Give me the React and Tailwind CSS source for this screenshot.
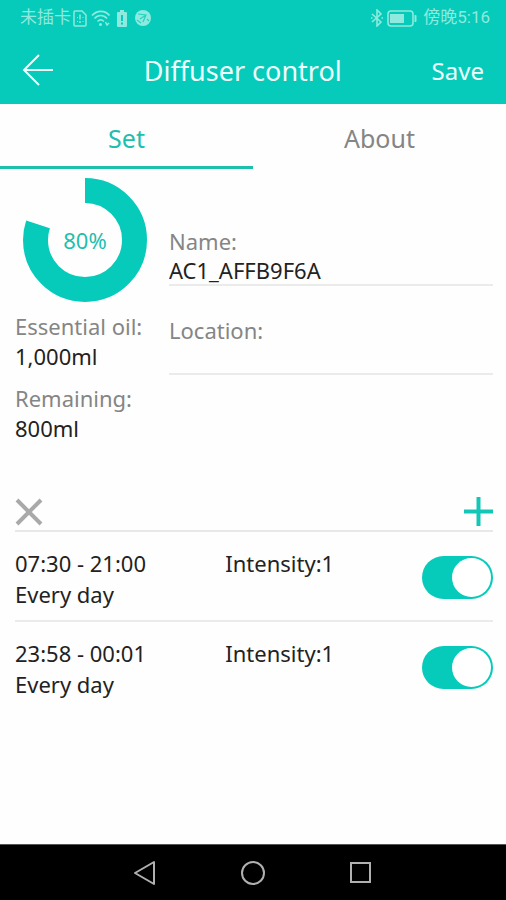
import { useState } from 'react';

const FONT = "font-['Noto_Sans','Noto_Sans_CJK_SC',sans-serif]";

const schedules = [
  { id: 'morning', time: '07:30 - 21:00', repeat: 'Every day', intensity: 1 },
  { id: 'night', time: '23:58 - 00:01', repeat: 'Every day', intensity: 1 },
];

function StatusBar() {
  return (
    <div className="flex h-9 items-center justify-between pr-4 pl-5 font-['Roboto','Noto_Sans_CJK_SC',sans-serif] text-[17px] text-[#8eeade]">
      <div className="flex items-center">
        <span>未插卡</span>
        <svg className="ml-0.5" width="14" height="17" viewBox="0 0 14 17" fill="none" stroke="currentColor" strokeWidth="1.5" aria-hidden="true">
          <path d="M2 1h7L13 5v10a1 1 0 0 1-1 1H2a1 1 0 0 1-1-1V2a1 1 0 0 1 1-1z" />
          <path d="M7 4.500v5M7 11v2" />
          <path d="M4 7.500h1M4 11.500h1M9.500 7.500h1M9.500 11.500h1" strokeWidth="1" />
        </svg>
        <svg className="ml-1" width="20" height="17" viewBox="0 0 20 17" fill="none" stroke="currentColor" strokeWidth="1.700" aria-hidden="true">
          <path d="M1 5.500C6 0 14 0 18.500 5.500M3.500 8.500c3.500-4 9-4 12.500 0M6.500 11.500c2-2 4.500-2 6.500 0" />
          <circle cx="9.500" cy="14.500" r="1.500" fill="currentColor" stroke="none" />
          <path d="M14.500 12l1.500 3 2-2" strokeWidth="1.500" />
        </svg>
        <svg className="ml-1.5" width="10" height="17" viewBox="0 0 10 17" aria-hidden="true">
          <path fillRule="evenodd" fill="currentColor" d="M3 0h4v2h2a1 1 0 0 1 1 1v13a1 1 0 0 1-1 1H1a1 1 0 0 1-1-1V3a1 1 0 0 1 1-1h2zM4 5v6h2V5zM4 12.500v2h2v-2z" />
        </svg>
        <svg className="ml-2" width="16" height="16" viewBox="0 0 16 16" aria-hidden="true">
          <circle cx="8" cy="8" r="8" fill="currentColor" />
          <path d="M3 4l8 1-3 7M5 9l6-4M2 10l4 3M12 9l2 2" fill="none" stroke="#25d2c0" strokeWidth="1.200" />
        </svg>
      </div>
      <div className="flex items-center">
        <svg width="12" height="18" viewBox="0 0 12 18" fill="none" stroke="currentColor" strokeWidth="1.600" aria-hidden="true">
          <path d="M1 5l9 8-4 4V1l4 4-9 8" />
          <path d="M0 9h1.500M10.500 9H12" />
        </svg>
        <svg className="mr-1.5 ml-1" width="30" height="17" viewBox="0 0 30 17" aria-hidden="true">
          <rect x="1" y="1" width="25" height="15" rx="3" fill="none" stroke="currentColor" strokeWidth="1.600" />
          <rect x="3" y="4" width="14" height="9" fill="currentColor" />
          <path d="M27.500 5h1a1 1 0 0 1 1 1v5a1 1 0 0 1-1 1h-1z" fill="currentColor" />
        </svg>
        <span>傍晚5:16</span>
      </div>
    </div>
  );
}

function OilGauge({ percent }) {
  const circumference = 2 * Math.PI * 49.5;
  const filled = (circumference * percent) / 100;
  return (
    <div className="ml-2 grid size-[124px] place-items-center">
      <svg className="col-start-1 row-start-1" width="124" height="124" viewBox="0 0 124 124" aria-hidden="true">
        <circle
          cx="62"
          cy="62"
          r="49.5"
          fill="none"
          stroke="#06cbba"
          strokeWidth="25"
          strokeDasharray={`${filled} ${circumference}`}
          transform="rotate(-90 62 62)"
        />
      </svg>
      <span className="col-start-1 row-start-1 text-[22px] text-[#1fbfae]">{percent}%</span>
    </div>
  );
}

function Reading({ label, value }) {
  return (
    <div className="leading-[30px]">
      <dt className="whitespace-nowrap text-[#858585]">{label}</dt>
      <dd className="text-[#222]">{value}</dd>
    </div>
  );
}

function Field({ id, label, defaultValue }) {
  return (
    <div className="flex flex-col border-b-2 border-[#ebebeb]">
      <label htmlFor={id} className="leading-[30px] text-[#858585]">{label}</label>
      <input id={id} defaultValue={defaultValue} className="h-7 w-full bg-transparent text-[#222] outline-none" />
    </div>
  );
}

function ScheduleRow({ schedule, last }) {
  const [on, setOn] = useState(true);
  return (
    <li className={last ? 'flex h-[90px] items-start pt-4' : 'flex h-[90px] items-start border-b-2 border-[#ebebeb] pt-4'}>
      <div className="w-[44%] leading-[31px]">
        <p>{schedule.time}</p>
        <p>{schedule.repeat}</p>
      </div>
      <p className="flex-1 leading-[31px]">Intensity:{schedule.intensity}</p>
      <label className="mt-2 flex h-[43px] w-[71px] cursor-pointer items-center rounded-full bg-[#b5b5b5] p-0.5 has-checked:justify-end has-checked:bg-[#06cbba]">
        <input
          type="checkbox"
          className="sr-only"
          checked={on}
          onChange={() => setOn(!on)}
          aria-label={`Schedule ${schedule.time}`}
        />
        <span className="size-[39px] rounded-full bg-white" />
      </label>
    </li>
  );
}

export default function App() {
  return (
    <div className={`flex min-h-screen flex-col bg-[#fefefe] text-[22px] text-[#222] ${FONT}`}>
      <header className="bg-[#06cbba]">
        <StatusBar />
        <div className="flex h-[68px] items-center justify-between px-[22px] text-[#eefffc]">
          <button type="button" aria-label="Back">
            <svg width="32" height="32" viewBox="0 0 32 32" fill="none" stroke="currentColor" strokeWidth="2" aria-hidden="true">
              <path d="M17 1L2 16l15 15M2 16h29" />
            </svg>
          </button>
          <h1 className="pt-0.5 text-[27px]">Diffuser control</h1>
          <button type="button" className="pt-0.5 text-2xl">Save</button>
        </div>
      </header>

      <nav className="grid h-[65px] grid-cols-2 text-[25px]">
        <button type="button" className="border-b-3 border-[#1fbfae] pt-2 text-[#1fbfae]">Set</button>
        <button type="button" className="border-b-3 border-transparent pt-2 text-[#858585]">About</button>
      </nav>

      <main className="pr-[13px] pl-[15px]">
        <section className="flex gap-3.5 pt-[9px]">
          <div className="w-[140px] shrink-0">
            <OilGauge percent={80} />
            <dl className="flex flex-col gap-3 pt-[9px]">
              <Reading label="Essential oil:" value="1,000ml" />
              <Reading label="Remaining:" value="800ml" />
            </dl>
          </div>
          <form className="flex flex-1 flex-col gap-[29px] pt-12">
            <Field id="device-name" label="Name:" defaultValue="AC1_AFFB9F6A" />
            <Field id="device-location" label="Location:" defaultValue="" />
          </form>
        </section>

        <section className="pt-[50px]">
          <div className="flex h-[39px] items-center justify-between border-b-2 border-[#e8e8e8]">
            <button type="button" aria-label="Delete schedule">
              <svg width="28" height="28" viewBox="0 0 28 28" stroke="#a9a9a9" strokeWidth="4" aria-hidden="true">
                <path d="M2 2l24 24M26 2L2 26" />
              </svg>
            </button>
            <button type="button" aria-label="Add schedule">
              <svg width="29" height="29" viewBox="0 0 29 29" stroke="#12c7b7" strokeWidth="4" aria-hidden="true">
                <path d="M0 14.500h29M14.500 0v29" />
              </svg>
            </button>
          </div>
          <ul>
            {schedules.map((schedule, index) => (
              <ScheduleRow key={schedule.id} schedule={schedule} last={index === schedules.length - 1} />
            ))}
          </ul>
        </section>
      </main>

      <footer className="mt-auto flex h-14 items-center justify-center gap-[82px] border-t border-[#555] bg-black text-[#b0b0b0]">
        <button type="button" aria-label="Back">
          <svg width="26" height="26" viewBox="0 0 26 26" fill="none" stroke="currentColor" strokeWidth="2" strokeLinejoin="round" aria-hidden="true">
            <path d="M22 2v22L3 13z" />
          </svg>
        </button>
        <button type="button" aria-label="Home">
          <svg width="26" height="26" viewBox="0 0 26 26" fill="none" stroke="currentColor" strokeWidth="2" aria-hidden="true">
            <circle cx="13" cy="13" r="11" />
          </svg>
        </button>
        <button type="button" aria-label="Recent apps">
          <svg width="26" height="26" viewBox="0 0 26 26" fill="none" stroke="currentColor" strokeWidth="2" aria-hidden="true">
            <rect x="3" y="3" width="19" height="19" />
          </svg>
        </button>
      </footer>
    </div>
  );
}
